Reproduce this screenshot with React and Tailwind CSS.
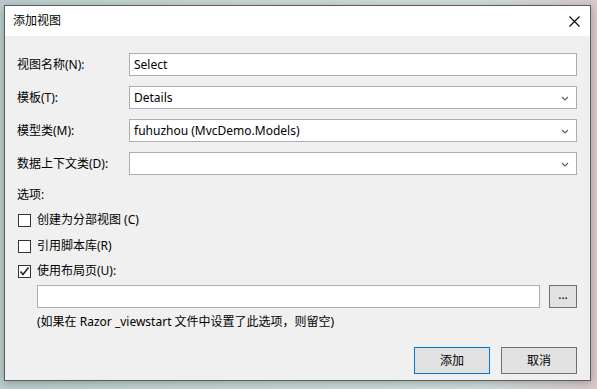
import React from "react";

const font = { fontFamily: '"Segoe UI", "Noto Sans", "Noto Sans CJK SC", sans-serif' };

function Chevron() {
  return (
    <svg width="8" height="5" viewBox="0 0 8 5" className="absolute right-[7px] top-[9px]">
      <path d="M1 1 L4 4 L7 1" fill="none" stroke="#606060" strokeWidth="1.1" />
    </svg>
  );
}

function Field({ label, value, select }) {
  return (
    <div className="flex items-center h-[23px]">
      <div className="w-[112px] text-[12px] leading-[16px] text-[#000]">{label}</div>
      <div className="relative flex-1 h-[23px] bg-white border border-[#abadb3] flex items-center pl-[4px] text-[12px] leading-[16px] text-black">
        {value}
        {select && <Chevron />}
      </div>
    </div>
  );
}

function Checkbox({ checked, label }) {
  return (
    <div className="flex items-center h-[16px] pl-[1px]">
      <div className="w-[13px] h-[13px] border border-[#333] bg-white flex items-center justify-center">
        {checked && (
          <svg width="11" height="11" viewBox="0 0 11 11">
            <path d="M1.5 5.5 L4 8.5 L9.5 1.5" fill="none" stroke="#222" strokeWidth="1.6" />
          </svg>
        )}
      </div>
      <span className="ml-[6px] text-[12px] leading-[16px] text-black">{label}</span>
    </div>
  );
}

export default function App() {
  return (
    <div
      className="w-[597px] h-[389px] overflow-hidden pl-[4px] pt-[5px] bg-[linear-gradient(90deg,#b9cccb_0%,#c6d6d5_40%,#cfdcdc_80%,#d9c9cb_100%)]"
      style={font}
    >
      <div className="w-[587px] h-[376px] border border-[#5c5c5c] bg-[#f0f0f0] flex flex-col shadow-[0_2px_8px_rgba(0,0,0,0.25)]">
        <div className="h-[30px] bg-white flex items-center justify-between pl-[8px] pr-[10px]">
          <span className="text-[12px] leading-[16px] text-black">添加视图</span>
          <svg width="11" height="11" viewBox="0 0 11 11">
            <path d="M0.5 0.5 L10.5 10.5 M10.5 0.5 L0.5 10.5" stroke="#000" strokeWidth="1.1" />
          </svg>
        </div>
        <div className="flex flex-col pl-[12px] pr-[13px] pt-[17px]">
          <div className="flex flex-col gap-[10px]">
            <Field label="视图名称(N):" value="Select" />
            <Field label="模板(T):" value="Details" select />
            <Field label="模型类(M):" value="fuhuzhou (MvcDemo.Models)" select />
            <Field label="数据上下文类(D):" value="" select />
          </div>
          <div className="mt-[12px] h-[16px] text-[12px] leading-[16px] text-black">选项:</div>
          <div className="mt-[9px]">
            <Checkbox label="创建为分部视图 (C)" />
          </div>
          <div className="mt-[10px]">
            <Checkbox label="引用脚本库(R)" />
          </div>
          <div className="mt-[9px]">
            <Checkbox checked label="使用布局页(U):" />
          </div>
          <div className="mt-[6px] flex items-center pl-[20px]">
            <div className="w-[504px] h-[23px] bg-white border border-[#abadb3]" />
            <div className="ml-[9px] w-[28px] h-[23px] bg-[#e1e1e1] border border-[#707070] flex items-center justify-center text-[12px] leading-[12px] text-black pb-[3px]">
              ...
            </div>
          </div>
          <div className="mt-[6px] pl-[20px] h-[16px] text-[12px] leading-[16px] text-black">
            (如果在 Razor _viewstart 文件中设置了此选项，则留空)
          </div>
          <div className="mt-[17px] flex justify-end gap-[11px]">
            <div className="w-[76px] h-[27px] bg-[#e1e1e1] border border-[#0078d7] flex items-center justify-center text-[12px] leading-[16px] text-black">
              添加
            </div>
            <div className="w-[76px] h-[27px] bg-[#e1e1e1] border border-[#707070] flex items-center justify-center text-[12px] leading-[16px] text-black">
              取消
            </div>
          </div>
        </div>
      </div>
    </div>
  );
}
